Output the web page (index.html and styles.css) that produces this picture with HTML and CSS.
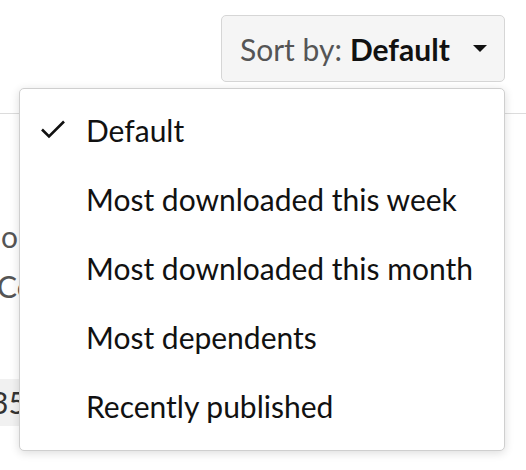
FILE: index.html
```html
<!DOCTYPE html>
<html>
<head>
<meta charset="utf-8">
<link rel="stylesheet" href="styles.css">
</head>
<body>
<div class="page">
  <div class="toolbar">
    <div class="sort-wrap">
      <button class="sort-btn"><span class="sort-label">Sort by:</span> <span class="sort-value">Default</span>
        <svg class="caret" width="14" height="8" viewBox="0 0 14 8"><path d="M0 0 L14 0 L7 7 Z" fill="#111"/></svg>
      </button>
      <ul class="menu">
        <li class="item selected">
          <svg class="check" width="26" height="20" viewBox="0 0 26 20"><path d="M2 10.5 L9 17.5 L24 2.5" fill="none" stroke="#111" stroke-width="2.6"/></svg>
          <span>Default</span>
        </li>
        <li class="item"><span>Most downloaded this week</span></li>
        <li class="item"><span>Most downloaded this month</span></li>
        <li class="item"><span>Most dependents</span></li>
        <li class="item"><span>Recently published</span></li>
      </ul>
    </div>
  </div>
  <div class="results">
    <p class="desc">o</p>
    <p class="meta">Co</p>
    <span class="badge">35</span>
  </div>
</div>
</body>
</html>
```

FILE: styles.css
```css
* { box-sizing: border-box; }
html, body { margin: 0; padding: 0; background: #fff; }
body { font-family: Lato, "Noto Sans", sans-serif; color: #111; overflow: hidden; }
.page { width: 526px; height: 470px; overflow: hidden; }
.toolbar { display: flex; justify-content: flex-end; padding: 15px 21px 0 0; }
.sort-wrap { position: relative; }
.sort-btn {
  display: flex; align-items: center;
  width: 284px; height: 67px;
  padding: 0 17px 0 18px;
  background: #f5f5f5;
  border: 1px solid #d6d6d6;
  border-radius: 5px;
  font-family: inherit; font-size: 30px;
  color: #555;
}
.sort-label { color: #555; margin-right: 8px; }
.sort-value { color: #111; font-weight: 700; }
.caret { margin-left: auto; }
.menu {
  position: absolute; right: 0; top: 73px;
  width: 486px; margin: 0; padding: 6px 0 10px;
  list-style: none;
  background: #fff;
  border: 1px solid #cfcfcf;
  border-radius: 5px;
  box-shadow: 0 2px 10px rgba(0,0,0,0.14);
  z-index: 10;
}
.item {
  display: flex; align-items: center;
  height: 69px;
  padding-left: 66px;
  position: relative;
  font-size: 30px; color: #111;
}
.check { position: absolute; left: 20px; top: 24px; }
.results {
  margin-top: 31px;
  border-top: 1px solid #dcdcdc;
  height: 400px;
  padding-top: 97px;
  font-size: 30px;
  color: #555;
}
.desc { margin: 0 0 0 1px; line-height: 50px; white-space: nowrap; }
.meta { margin: 0 0 0 -3px; line-height: 50px; white-space: nowrap; }
.results .badge {
  display: inline-block; margin-top: 68px;
  height: 47px; line-height: 47px;
  padding: 0 4px 0 0;
  margin-left: -9px;
  background: #f1f1f1; color: #333;
  white-space: nowrap;
}
```
